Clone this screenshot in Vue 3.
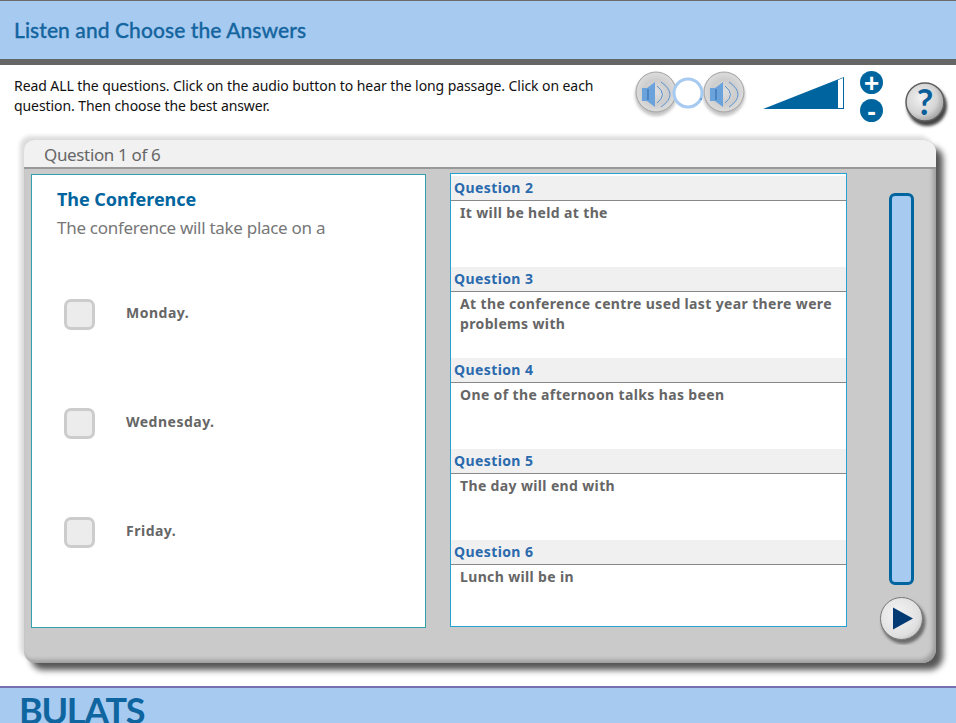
<script setup>
const options = ['Monday.', 'Wednesday.', 'Friday.']
const questions = [
  { title: 'Question 2', text: 'It will be held at the' },
  { title: 'Question 3', text: 'At the conference centre used last year there were problems with' },
  { title: 'Question 4', text: 'One of the afternoon talks has been' },
  { title: 'Question 5', text: 'The day will end with' },
  { title: 'Question 6', text: 'Lunch will be in' },
]
</script>

<template>
  <div class="page">
    <header class="top">
      <h1>Listen and Choose the Answers</h1>
    </header>

    <section class="toolbar">
      <p class="instructions">Read ALL the questions. Click on the audio button to hear the long passage. Click on each question. Then choose the best answer.</p>
      <svg class="audio" width="116" height="60" viewBox="0 0 116 60">
        <defs>
          <radialGradient id="disc" cx="0.5" cy="0.5" r="0.55">
            <stop offset="0" stop-color="#dedede" />
            <stop offset="0.55" stop-color="#cdcdcd" />
            <stop offset="0.85" stop-color="#dadada" />
            <stop offset="1" stop-color="#a4a4a4" />
          </radialGradient>
          <filter id="soft" x="-30%" y="-30%" width="160%" height="160%">
            <feGaussianBlur stdDeviation="1.8" />
          </filter>
          <filter id="glow" x="-30%" y="-30%" width="160%" height="160%">
            <feGaussianBlur stdDeviation="0.5" />
          </filter>
        </defs>
        <g v-for="x in [25, 93]" :key="x">
          <circle :cx="x" cy="30" r="21" fill="#c4c4c4" filter="url(#soft)" />
          <circle :cx="x" cy="27" r="20" fill="url(#disc)" stroke="#a8a8a8" />
          <path :d="`M${x - 14} 23h5l8 -6v25l-8 -6h-5z`" fill="#6aa2dc" />
          <path :d="`M${x - 8} 24v11`" stroke="#3e78b4" stroke-width="1.4" />
          <path :d="`M${x + 1} 21q11 8.5 0 17M${x + 5} 17q18 12.5 0 25`" stroke="#5a94d0" stroke-width="1" fill="none" />
        </g>
        <circle cx="57" cy="28" r="14" fill="#fff" stroke="#a6caf0" stroke-width="3" filter="url(#glow)" />
        <circle cx="70" cy="34" r="1" fill="#5a94d0" />
      </svg>
      <svg class="volume" width="82" height="32" viewBox="0 0 82 32">
        <path d="M0 32L81 0V32Z" fill="#00659f" />
        <path d="M75 3L80 1V31H75Z" fill="#fff" />
      </svg>
      <div class="steppers">
        <button class="step">+</button>
        <button class="step">-</button>
      </div>
      <svg class="help" width="48" height="52" viewBox="0 0 48 52">
        <defs>
          <radialGradient id="helpDisc" cx="0.4" cy="0.4" r="0.7">
            <stop offset="0" stop-color="#f2f2f2" />
            <stop offset="0.6" stop-color="#d4d4d4" />
            <stop offset="1" stop-color="#8e8e8e" />
          </radialGradient>
        </defs>
        <circle cx="23" cy="27" r="20" fill="#444" filter="url(#soft)" />
        <circle cx="21" cy="23" r="19" fill="url(#helpDisc)" stroke="#5e5e5e" stroke-width="1.5" />
        <text x="21" y="36" text-anchor="middle" class="help-mark">?</text>
      </svg>
    </section>

    <main class="panel">
      <div class="tab">Question 1 of 6</div>
      <div class="body">
        <section class="left">
          <h2>The Conference</h2>
          <p class="prompt">The conference will take place on a</p>
          <ul class="options">
            <li v-for="o in options" :key="o">
              <span class="check"></span>
              <span class="label">{{ o }}</span>
            </li>
          </ul>
        </section>
        <section class="right">
          <article v-for="q in questions" :key="q.title" class="question">
            <h3>{{ q.title }}</h3>
            <p>{{ q.text }}</p>
          </article>
        </section>
        <aside class="side">
          <div class="scroll"></div>
          <svg class="next" width="52" height="52" viewBox="0 0 52 52">
            <defs>
              <radialGradient id="nextDisc" cx="0.4" cy="0.4" r="0.75">
                <stop offset="0" stop-color="#f4f4f4" />
                <stop offset="0.7" stop-color="#e0e0e0" />
                <stop offset="1" stop-color="#b0b0b0" />
              </radialGradient>
            </defs>
            <circle cx="26.5" cy="29" r="22" fill="#6c6c6c" filter="url(#soft)" />
            <circle cx="24.5" cy="25.5" r="21" fill="url(#nextDisc)" stroke="#777" />
            <path d="M16 14.5L36 25.5L16 36.5Z" fill="#043a73" />
          </svg>
        </aside>
      </div>
    </main>

    <footer class="bottom">BULATS</footer>
  </div>
</template>

<style scoped>
.page {
  width: 956px;
  height: 723px;
  overflow: hidden;
  display: flex;
  flex-direction: column;
  background: #fff;
  font-family: "Noto Sans", "DejaVu Sans", sans-serif;
}
.top {
  flex: none;
  height: 58px;
  box-sizing: content-box;
  border-top: 1px solid #6a6a6a;
  border-bottom: 6px solid #666;
  background: #a6caf0;
  display: flex;
  align-items: center;
  padding-left: 14px;
}
h1 {
  margin: 0 0 2px;
  font: 500 21px "Lato", sans-serif;
  letter-spacing: 0.08px;
  -webkit-text-stroke: 0.3px #14659f;
  color: #14659f;
}
.toolbar {
  flex: none;
  height: 71px;
  display: flex;
  align-items: flex-start;
}
.instructions {
  width: 590px;
  margin: 11px 0 0 14px;
  font-size: 14px;
  line-height: 20px;
  letter-spacing: -0.08px;
  color: #111;
}
.audio {
  margin: 0 0 0 27px;
}
.volume {
  margin: 12px 0 0 16px;
}
.steppers {
  margin: 6px 0 0 15px;
  display: flex;
  flex-direction: column;
  gap: 5px;
}
.step {
  width: 23px;
  height: 23px;
  padding: 0;
  border: 0;
  border-radius: 50%;
  background: #00659f;
  color: #fff;
  font: 700 26px/22px "Liberation Sans", sans-serif;
}
.help {
  margin: 14px 0 0 21px;
}
.help-mark {
  font: 700 36px "Lato", sans-serif;
  fill: #0a5f9a;
}
.panel {
  flex: none;
  width: 912px;
  height: 523px;
  margin-left: 24px;
  margin-top: 4px;
  background: #cacaca;
  border-radius: 10px 12px 14px 12px;
  box-shadow: 7px 7px 6px #565656, -4px -4px 4px #dcdcdc, inset -3px -3px 4px #9c9c9c;
  display: flex;
  flex-direction: column;
}
.tab {
  flex: none;
  height: 27px;
  background: #f1f1f1;
  border-bottom: 2px solid #999;
  border-radius: 10px 12px 0 0;
  padding-left: 20px;
  font-size: 17px;
  line-height: 29px;
  letter-spacing: -0.35px;
  color: #666;
}
.body {
  flex: 1;
  display: flex;
  align-items: flex-start;
  padding: 4px 0 0 7px;
}
.left {
  box-sizing: border-box;
  width: 395px;
  height: 454px;
  margin-top: 1px;
  background: #fff;
  border: 1px solid #33a0b0;
  padding: 12px 0 0 25px;
}
h2 {
  margin: 0;
  font-size: 18px;
  line-height: 24px;
  font-weight: 700;
  letter-spacing: -0.05px;
  color: #00659f;
}
.prompt {
  margin: 5px 0 0;
  font-size: 17px;
  line-height: 24px;
  letter-spacing: -0.29px;
  color: #777;
}
.options {
  list-style: none;
  margin: 0;
  padding: 59px 0 0 7px;
}
.options li {
  height: 109px;
  display: flex;
  align-items: flex-start;
}
.check {
  box-sizing: border-box;
  width: 31px;
  height: 31px;
  border: 3px solid #ccc;
  border-radius: 7px;
  background: #ececec;
}
.label {
  margin: 4px 0 0 31px;
  font-size: 14px;
  line-height: 20px;
  font-weight: 700;
  letter-spacing: 0.5px;
  color: #666;
}
.right {
  box-sizing: border-box;
  width: 397px;
  height: 454px;
  margin-left: 24px;
  background: #fff;
  border: 1px solid #2a9fd6;
  padding-top: 2px;
}
.question {
  height: 91px;
}
h3 {
  margin: 0;
  height: 24px;
  padding-left: 3px;
  background: #f0f0f0;
  border-bottom: 1px solid #888;
  font-size: 14px;
  line-height: 24px;
  font-weight: 700;
  letter-spacing: 0.4px;
  color: #2a6aad;
}
.question p {
  margin: 2px 0 0;
  padding: 0 10px 0 9px;
  font-size: 14px;
  line-height: 20px;
  font-weight: 700;
  letter-spacing: 0.36px;
  color: #666;
}
.side {
  display: flex;
  flex-direction: column;
  align-items: flex-start;
  margin-left: 30px;
}
.scroll {
  box-sizing: border-box;
  width: 25px;
  height: 392px;
  margin: 20px 0 0 12px;
  background: #a6caf0;
  border: 3px solid #00659f;
  border-radius: 6px;
}
.next {
  margin-top: 8px;
}
.bottom {
  flex: none;
  height: 35px;
  margin-top: 23px;
  border-top: 2px solid #7670b0;
  background: #a6caf0;
  padding-left: 19px;
  overflow: hidden;
  font: 700 36px/44px "Lato", sans-serif;
  letter-spacing: -1.3px;
  color: #0f659f;
}
</style>
